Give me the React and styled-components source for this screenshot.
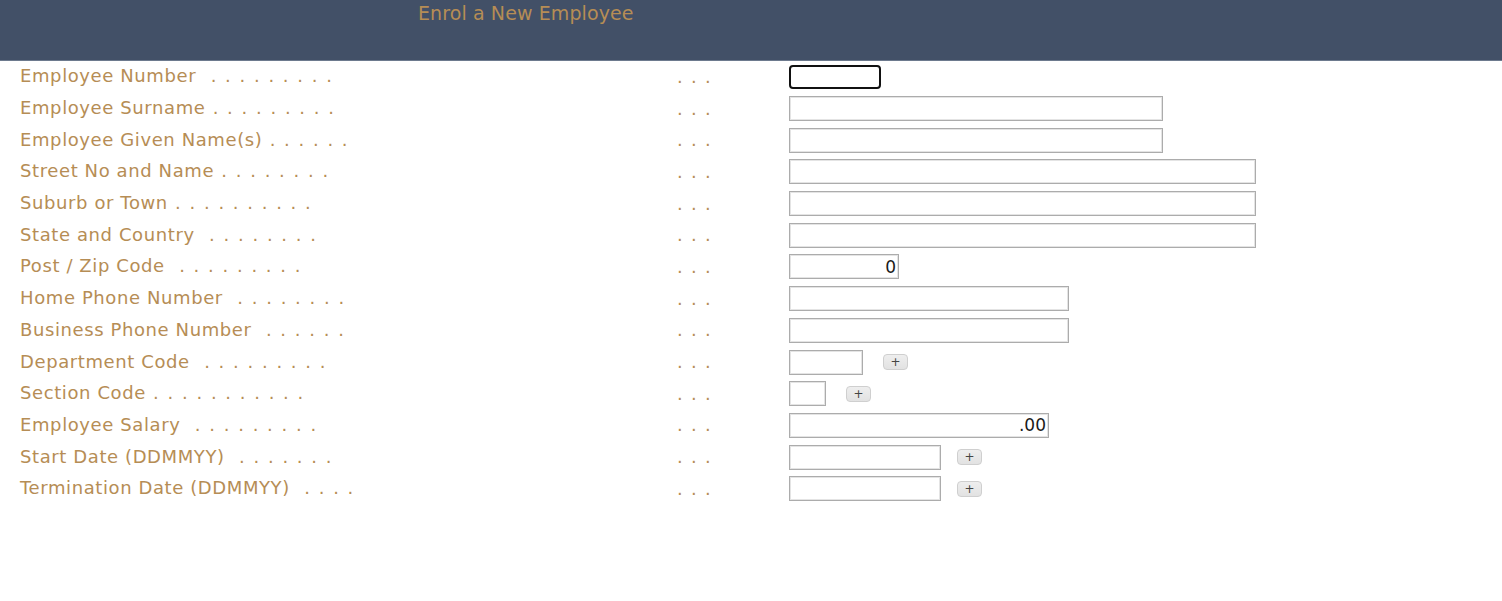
import React from 'react'
import styled, { createGlobalStyle } from 'styled-components'

const GlobalStyle = createGlobalStyle`
	html, body {
		margin: 0;
		padding: 0;
		background: white;
	}
	body {
		font-family: 'DejaVu Sans', Verdana, sans-serif;
	}
`

const Header = styled.div`
	height: 60px;
	background: #425067;
	border-bottom: 1px solid #6d7a8e;
	padding-left: 418px;
`

const Title = styled.h1`
	margin: 0;
	padding-top: 1px;
	font-family: 'DejaVu Sans', Verdana, sans-serif;
	font-weight: normal;
	font-size: 19px;
	letter-spacing: 0.1px;
	line-height: 24px;
	color: #b68d55;
`

const Form = styled.div`
	display: grid;
	grid-template-columns: 656px 113px 1fr;
	grid-auto-rows: 31.7px;
	padding: 0 0 0 20px;
	align-items: center;
`

const Label = styled.div`
	font-size: 18px;
	letter-spacing: 0.6px;
	color: #b68d55;
	white-space: pre;
	line-height: 24px;
	margin-top: -1px;
`

const Leader = styled.span`
	letter-spacing: 1.5px;
`

const Dots = styled.div`
	font-size: 18px;
	color: #b68d55;
	letter-spacing: 1.3px;
	line-height: 24px;
	white-space: pre;
	padding-left: 1px;
`

const Field = styled.div`
	display: flex;
	align-items: center;
	gap: ${p => p.$gap || 20}px;
`

const Input = styled.input`
	box-sizing: border-box;
	width: ${p => p.$w}px;
	height: 25px;
	margin: 0;
	padding: 0 2px;
	border: 1px solid #acacac;
	box-shadow: inset 0 0 0 1px #e4e4e4;
	background: white;
	font-family: 'DejaVu Sans', sans-serif;
	font-size: 17px;
	color: #1a1a1a;
	text-align: ${p => (p.$right ? 'right' : 'left')};
	outline: none;

	&.focused {
		border: 2px solid #111;
		border-radius: 4px;
		box-shadow: none;
		height: 24px;
	}
`

const PlusButton = styled.button`
	width: 25px;
	height: 16px;
	padding: 0;
	margin: 0;
	border: 1px solid #cfcfcf;
	border-radius: 4px;
	background: linear-gradient(#eeeeee, #e2e2e2);
	color: #444;
	font-family: 'DejaVu Sans', sans-serif;
	font-size: 12px;
	line-height: 14px;
	cursor: pointer;
`

const fields = [
	{ name: 'Employee Number', lead: '  . . . . . . . . .', w: 92, focused: true },
	{ name: 'Employee Surname', lead: ' . . . . . . . . .', w: 374 },
	{ name: 'Employee Given Name(s)', lead: ' . . . . . .', w: 374 },
	{ name: 'Street No and Name', lead: ' . . . . . . . .', w: 467 },
	{ name: 'Suburb or Town', lead: ' . . . . . . . . . .', w: 467 },
	{ name: 'State and Country', lead: '  . . . . . . . .', w: 467 },
	{ name: 'Post / Zip Code', lead: '  . . . . . . . . .', w: 110, value: '0', right: true },
	{ name: 'Home Phone Number', lead: '  . . . . . . . .', w: 280 },
	{ name: 'Business Phone Number', lead: '  . . . . . .', w: 280 },
	{ name: 'Department Code', lead: '  . . . . . . . . .', w: 74, plus: true },
	{ name: 'Section Code', lead: ' . . . . . . . . . . .', w: 37, plus: true },
	{ name: 'Employee Salary', lead: '  . . . . . . . . .', w: 260, value: '.00', right: true },
	{ name: 'Start Date (DDMMYY)', lead: '  . . . . . . .', w: 152, plus: true, gap: 16 },
	{ name: 'Termination Date (DDMMYY)', lead: '  . . . .', w: 152, plus: true, gap: 16 },
]

const App = () => {
	return (
		<>
			<GlobalStyle />
			<Header>
				<Title>Enrol a New Employee</Title>
			</Header>
			<Form>
				{fields.map(f => (
					<React.Fragment key={f.name}>
						<Label>
							{f.name}
							<Leader>{f.lead}</Leader>
						</Label>
						<Dots>. . .</Dots>
						<Field $gap={f.gap}>
							<Input
								className={f.focused ? 'focused' : undefined}
								$w={f.w}
								$right={f.right}
								defaultValue={f.value || ''}
							/>
							{f.plus && <PlusButton>+</PlusButton>}
						</Field>
					</React.Fragment>
				))}
			</Form>
		</>
	)
}

export default App
